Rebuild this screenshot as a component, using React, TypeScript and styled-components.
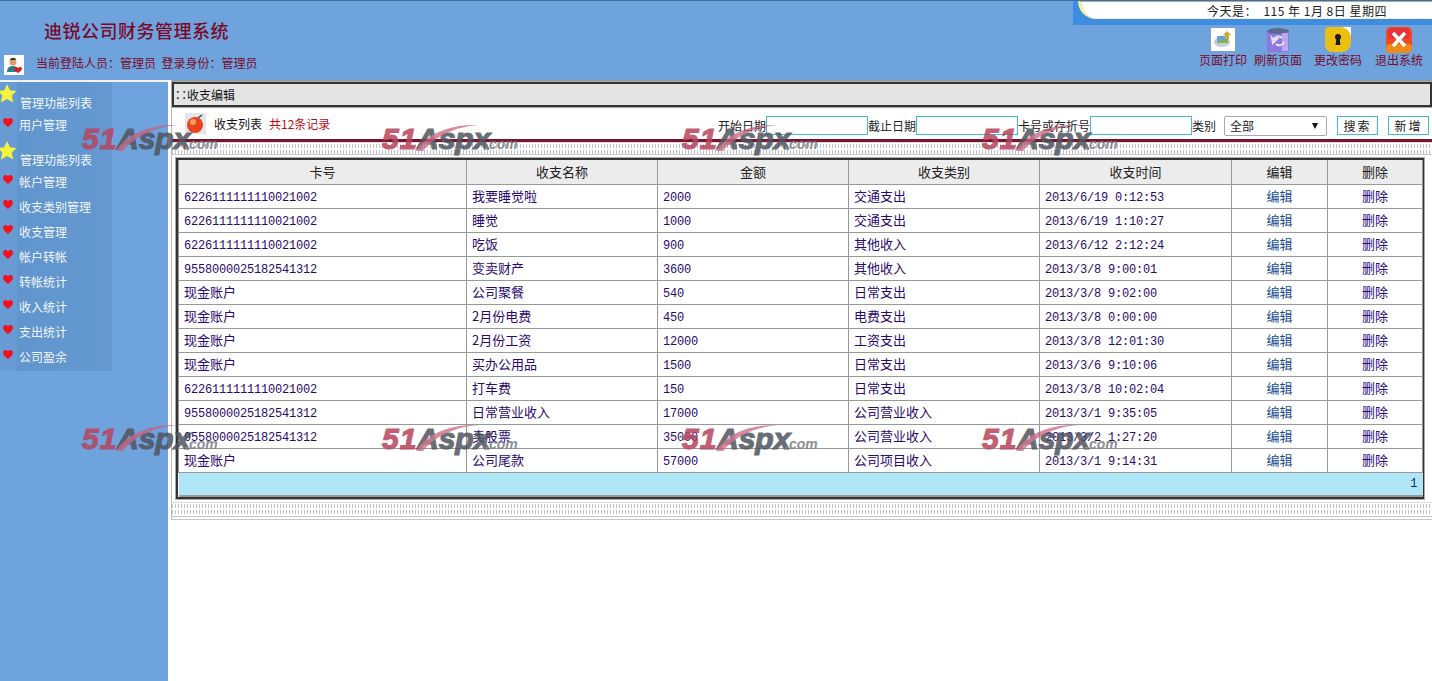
import React from "react";
import styled, { createGlobalStyle } from "styled-components";

const cjk = `"Noto Sans CJK SC", "Liberation Sans", sans-serif`;
const mono = `"Liberation Mono", "Noto Sans CJK SC", monospace`;

const Global = createGlobalStyle`
  html, body { margin: 0; padding: 0; background: #fff; }
  body { font-family: ${cjk}; font-size: 12px; overflow: hidden; }
  * { box-sizing: border-box; }
`;

const Page = styled.div`
  position: relative;
  width: 1432px;
  height: 681px;
  overflow: hidden;
  background: #fff;
`;

const Header = styled.header`
  height: 80px;
  background: #6fa3dd;
  border-top: 1px solid #3f6f9f;
  display: flex;
  justify-content: space-between;
`;
const Brand = styled.div`
  display: flex;
  flex-direction: column;
  padding: 18px 0 0 4px;
`;
const SystemTitle = styled.h1`
  margin: 0 0 0 40px;
  font-size: 18px;
  line-height: 22px;
  letter-spacing: 0.5px;
  font-weight: 500;
  color: #7a0a2a;
`;
const UserLine = styled.div`
  display: flex;
  align-items: flex-start;
  margin-top: 14px;
  color: #7a0a2a;
  font-size: 12px;
  line-height: 16px;
  gap: 12px;
`;
const Avatar = styled.span`
  width: 20px;
  height: 20px;
  background: #fff;
  display: block;
`;
const Tools = styled.div`
  width: 359px;
  display: flex;
  flex-direction: column;
`;
const DateBar = styled.div`
  height: 24px;
  background: #3f8de0;
  padding-left: 5px;
`;
const DateInner = styled.div`
  height: 18px;
  background: #fff;
  border-bottom-left-radius: 20px;
  border-left: 4px solid #eef2a8;
  border-bottom: 1px solid #eef2c8;
  border-top: 1px solid #aaa;
  color: #222;
  font-size: 12px;
  letter-spacing: 0.5px;
  line-height: 17px;
  padding-left: 125px;
  white-space: pre;
`;
const ToolRow = styled.div`
  display: flex;
  padding: 2px 0 0 124px;
`;
const ToolLink = styled.a<{ $w: number }>`
  width: ${(p) => p.$w}px;
  display: flex;
  flex-direction: column;
  align-items: center;
  color: #7a0a2a;
  font-size: 12px;
  line-height: 16px;
`;
const ToolIcon = styled.svg`
  display: block;
  width: 26px;
  height: 26px;
  margin-bottom: -1px;
`;

const Body = styled.div`
  display: flex;
  height: 601px;
`;
const Sidebar = styled.aside`
  width: 168px;
  flex: none;
  background: #6fa3dd;
  border-top: 2px solid #f0f4fa;
`;
const SidePanel = styled.div`
  width: 112px;
  height: 289px;
  padding-top: 10px;
  background: linear-gradient(90deg, #689ad3 0, #689ad3 17px, #6095ce 17px, #6598d1 100%);
`;
const MenuGroup = styled.ul`
  list-style: none;
  margin: 0 0 10px;
  padding: 0;
`;
const MenuTitle = styled.li`
  position: relative;
  height: 22px;
  line-height: 22px;
  padding-left: 20px;
  color: #f2f6fb;
`;
const Star = styled.svg`
  position: absolute;
  left: -2px;
  top: -9px;
  width: 19px;
  height: 21px;
`;
const MenuItem = styled.li`
  position: relative;
  height: 25px;
  line-height: 22px;
  padding-left: 19px;
  color: #f2f6fb;
`;
const Heart = styled.svg`
  position: absolute;
  left: 3px;
  top: 4px;
  width: 10px;
  height: 9px;
`;

const Main = styled.main`
  margin-left: 3px;
  width: 1261px;
  height: 440px;
  border-top: 1px solid #999;
  border-left: 1px solid #bbb;
  border-bottom: 1px solid #c4c4d0;
  padding-top: 1px;
`;
const TitleBar = styled.div`
  height: 25px;
  background: #e4e4e4;
  border: 2px solid #333;
  outline: 1px solid #aaa;
  line-height: 21px;
  padding-left: 1px;
  color: #111;
  font-size: 12px;
`;
const Toolbar = styled.div`
  height: 32px;
  display: flex;
  align-items: center;
  padding: 5px 3px 0 13px;
`;
const ListHead = styled.div`
  display: flex;
  align-items: center;
  margin-bottom: 5px;
`;
const ListIcon = styled.svg`
  width: 21px;
  height: 21px;
  margin-right: 8px;
`;
const ListLabel = styled.span`
  color: #111;
`;
const Count = styled.span`
  color: #c00a1a;
  margin-left: 7px;
`;
const Filters = styled.form`
  margin: 0 0 0 auto;
  display: flex;
  align-items: center;
  color: #222;
  line-height: 20px;
`;
const DateInput = styled.input`
  width: 102px;
  height: 19px;
  border: 1px solid #45bccb;
  background: #fff;
  padding: 0;
`;
const CategorySelect = styled.div`
  width: 103px;
  height: 20px;
  margin: 0 10px 0 8px;
  border: 1px solid #aaa;
  border-radius: 2px;
  display: flex;
  justify-content: space-between;
  align-items: center;
  padding: 0 8px 0 5px;
  font-size: 12px;
  color: #222;
`;
const Caret = styled.i`
  width: 0;
  height: 0;
  border-left: 3.5px solid transparent;
  border-right: 3.5px solid transparent;
  border-top: 6px solid #111;
`;
const ActionButton = styled.button`
  width: 41px;
  height: 19px;
  margin-right: 10px;
  padding: 0;
  border: 1px solid #45bccb;
  background: #fff;
  color: #222;
  font: 12px ${cjk};
  line-height: 16px;
  letter-spacing: 2px;
  &:last-child { margin-right: 0; }
`;
const RedRule = styled.div`
  height: 3px;
  background: #7a1530;
`;
const Dots = styled.div<{ $h: number }>`
  height: ${(p) => p.$h}px;
  border-top: 1px solid #ddd;
  border-bottom: 1px solid #c8c8d4;
  background:
    repeating-linear-gradient(180deg, #fff 0 1px, transparent 1px 5px, #fff 5px 6px),
    repeating-linear-gradient(90deg, #c4c4cc 0 1px, #fff 1px 3px);
`;
const TableFrame = styled.div`
  margin: 3px 4px 3px 4px;
  border: 2px solid #333;
  outline: 1px solid #aaa;
  width: 1248px;
`;
const Grid = styled.table`
  width: 100%;
  border-collapse: collapse;
  table-layout: fixed;
  font-size: 13px;
`;
const Th = styled.th`
  height: 24px;
  padding: 0;
  font-weight: 400;
  color: #222;
  background: #ececec;
  border: 1px solid #999;
  border-top: 0;
`;
const Td = styled.td<{ $num?: boolean }>`
  height: 24px;
  padding: ${(p) => (p.$num ? "4px 0 0 5px" : "0 0 2px 5px")};
  color: #2a0a70;
  border: 1px solid #999;
  font-family: ${(p) => (p.$num ? mono : cjk)};
  font-size: ${(p) => (p.$num ? "12px" : "13px")};
  letter-spacing: ${(p) => (p.$num ? "-0.2px" : "0")};
  white-space: nowrap;
`;
const LinkCell = styled.td<{ $tone: string }>`
  height: 24px;
  padding: 0 0 2px;
  text-align: center;
  color: ${(p) => p.$tone};
  border: 1px solid #999;
  font-size: 13px;
`;
const Pager = styled.td`
  height: 24px;
  background: #aee6f8;
  text-align: right;
  padding-right: 5px;
  color: #1a1a70;
  font-family: ${mono};
  font-size: 12px;
  border-bottom: 2px solid #999;
`;

const Mark = styled.div<{ $x: number; $y: number }>`
  position: absolute;
  left: ${(p) => p.$x}px;
  top: ${(p) => p.$y}px;
  width: 140px;
  height: 34px;
  pointer-events: none;
  white-space: nowrap;
  font-family: "Liberation Sans", sans-serif;
  font-weight: 700;
  font-style: italic;
  opacity: 0.85;
`;
const MarkNum = styled.span`
  position: absolute;
  left: 2px;
  top: 1px;
  font-size: 30px;
  line-height: 30px;
  letter-spacing: 1px;
  color: #b8445e;
  -webkit-text-stroke: 1.2px #b8445e;
`;
const MarkName = styled.span`
  position: absolute;
  left: 37px;
  top: 1px;
  font-size: 30px;
  line-height: 30px;
  color: #50545f;
  -webkit-text-stroke: 1.2px #50545f;
`;
const MarkDomain = styled.span`
  position: absolute;
  left: 105px;
  top: 13px;
  font-size: 14px;
  line-height: 16px;
  color: #7d7d82;
`;
const Swoosh = styled.svg`
  position: absolute;
  left: 36px;
  top: 0;
  width: 62px;
  height: 28px;
`;

const rows = [
  ["6226111111110021002", "我要睡觉啦", "2000", "交通支出", "2013/6/19 0:12:53"],
  ["6226111111110021002", "睡觉", "1000", "交通支出", "2013/6/19 1:10:27"],
  ["6226111111110021002", "吃饭", "900", "其他收入", "2013/6/12 2:12:24"],
  ["9558000025182541312", "变卖财产", "3600", "其他收入", "2013/3/8 9:00:01"],
  ["现金账户", "公司聚餐", "540", "日常支出", "2013/3/8 9:02:00"],
  ["现金账户", "2月份电费", "450", "电费支出", "2013/3/8 0:00:00"],
  ["现金账户", "2月份工资", "12000", "工资支出", "2013/3/8 12:01:30"],
  ["现金账户", "买办公用品", "1500", "日常支出", "2013/3/6 9:10:06"],
  ["6226111111110021002", "打车费", "150", "日常支出", "2013/3/8 10:02:04"],
  ["9558000025182541312", "日常营业收入", "17000", "公司营业收入", "2013/3/1 9:35:05"],
  ["9558000025182541312", "卖股票", "35000", "公司营业收入", "2013/3/2 1:27:20"],
  ["现金账户", "公司尾款", "57000", "公司项目收入", "2013/3/1 9:14:31"],
];
const heads = ["卡号", "收支名称", "金额", "收支类别", "收支时间", "编辑", "删除"];
const widths = [288, 191, 191, 191, 192, 96, 95];
const menuB = ["帐户管理", "收支类别管理", "收支管理", "帐户转帐", "转帐统计", "收入统计", "支出统计", "公司盈余"];
const isNumeric = (s: string) => /^[\d/: ]+$/.test(s);

const StarIcon = () => (
  <Star viewBox="0 0 20 20"><path d="M9.500 0l3 6.500 7 .8-5 4.800 1.500 7.400-6.500-3.700L3 19.500 4.500 12 -.5 7.300l7-.8z" fill="#f6f43a" /></Star>
);
const HeartIcon = () => (
  <Heart viewBox="0 0 11 10"><path d="M5.500 10C2 7.200 0 5.500 0 3 0 1.200 1.300 0 2.800 0 4 0 5 .7 5.500 1.700 6 .7 7 0 8.200 0 9.700 0 11 1.200 11 3c0 2.500-2 4.200-5.500 7z" fill="#f4101c" /></Heart>
);

const WaterMark = ({ x, y }: { x: number; y: number }) => (
  <Mark $x={x} $y={y}>
    <MarkNum>51</MarkNum>
    <MarkName>Aspx</MarkName>
    <MarkDomain>.com</MarkDomain>
    <Swoosh viewBox="0 0 62 28">
      <path d="M0 28C10 12 32 1 62 2 38 4 18 14 7 28z" fill="#c8607a" opacity="0.85" />
    </Swoosh>
  </Mark>
);

export default function App() {
  const marks = [80, 380, 680, 980];
  return (
    <Page>
      <Global />
      <Header>
        <Brand>
          <SystemTitle>迪锐公司财务管理系统</SystemTitle>
          <UserLine>
            <Avatar>
              <svg width="20" height="20" viewBox="0 0 20 20">
                <circle cx="9" cy="7" r="3.500" fill="#d9a060" />
                <path d="M6 5c0-3 6-3 6 0z" fill="#3a3a2a" />
                <path d="M3 17c0-5 3-6 6-6s5 2 5 6z" fill="#2f7f8f" />
                <path d="M14 18c-3-2-4-3-4-4.500 0-2 3-2 4-.5 1-1.500 4-1.500 4 .5 0 1.500-1 2.500-4 4.500z" fill="#d8202a" />
              </svg>
            </Avatar>
            <span>当前登陆人员：管理员&nbsp;&nbsp;登录身份：管理员</span>
          </UserLine>
        </Brand>
        <Tools>
          <DateBar>
            <DateInner>今天是：  115 年 1月 8日 星期四</DateInner>
          </DateBar>
          <ToolRow>
            <ToolLink $w={52}>
              <ToolIcon viewBox="0 0 26 26">
                <rect x="1" y="1" width="24" height="23" fill="#fff" />
                <ellipse cx="12" cy="15" rx="8" ry="5" fill="#c4ccd4" />
                <rect x="7" y="9" width="11" height="7" fill="#5fa5d8" />
                <path d="M7 16l4-4 3 2 4-2v4z" fill="#8ab04a" />
                <path d="M17 4l4 4h-2v4h-4V8h-2z" fill="#d4a82a" />
              </ToolIcon>
              页面打印
            </ToolLink>
            <ToolLink $w={58}>
              <ToolIcon viewBox="0 0 26 26">
                <rect x="2" y="3" width="22" height="22" rx="2" fill="#8f78e0" />
                <ellipse cx="13" cy="4" rx="11" ry="3" fill="#5a6a90" />
                <rect x="17" y="6" width="6" height="18" fill="#b8a8f0" />
                <path d="M17 11a5 5 0 0 0-8 1h3l-4 4-1-5 1 1m3 5a5 5 0 0 0 8-2" stroke="#e8e4ff" strokeWidth="2" fill="none" />
              </ToolIcon>
              刷新页面
            </ToolLink>
            <ToolLink $w={62}>
              <ToolIcon viewBox="0 0 26 26">
                <rect x="13" y="0" width="13" height="12" fill="#fff" />
                <path d="M0 4a4 4 0 0 1 4-4h11a11 11 0 0 1 11 11v5a9 9 0 0 1-9 9H7a7 7 0 0 1-7-7z" fill="#ecc010" />
                <circle cx="13" cy="10" r="3" fill="#221a08" />
                <path d="M11.500 11h3l1 7h-5z" fill="#221a08" />
              </ToolIcon>
              更改密码
            </ToolLink>
            <ToolLink $w={60}>
              <ToolIcon viewBox="0 0 26 26">
                <rect x="0" y="0" width="26" height="26" rx="5" fill="#f04a20" />
                <rect x="2" y="1" width="22" height="11" rx="4" fill="#e8323a" />
                <rect x="0" y="17" width="26" height="9" rx="4" fill="#ef8a18" />
                <path d="M7 6l12 13M19 6L7 19" stroke="#fff" strokeWidth="3.500" />
              </ToolIcon>
              退出系统
            </ToolLink>
          </ToolRow>
        </Tools>
      </Header>
      <Body>
        <Sidebar>
          <SidePanel>
            <MenuGroup>
              <MenuTitle><StarIcon />管理功能列表</MenuTitle>
              <MenuItem><HeartIcon />用户管理</MenuItem>
            </MenuGroup>
            <MenuGroup>
              <MenuTitle><StarIcon />管理功能列表</MenuTitle>
              {menuB.map((m) => (
                <MenuItem key={m}><HeartIcon />{m}</MenuItem>
              ))}
            </MenuGroup>
          </SidePanel>
        </Sidebar>
        <Main>
          <TitleBar>∷收支编辑</TitleBar>
          <Toolbar>
            <ListHead>
              <ListIcon viewBox="0 0 21 21">
                <rect width="21" height="21" fill="#e4e4ec" />
                <circle cx="10" cy="12" r="8" fill="#e8441a" />
                <circle cx="8" cy="9" r="3" fill="#f8a060" />
                <path d="M13 5l4-3" stroke="#444" strokeWidth="1.500" />
              </ListIcon>
              <ListLabel>收支列表</ListLabel>
              <Count>共12条记录</Count>
            </ListHead>
            <Filters>
              开始日期<DateInput />
              截止日期<DateInput />
              卡号或存折号<DateInput />
              类别
              <CategorySelect>全部<Caret /></CategorySelect>
              <ActionButton type="button">搜索</ActionButton>
              <ActionButton type="button">新增</ActionButton>
            </Filters>
          </Toolbar>
          <RedRule />
          <Dots $h={13} />
          <TableFrame>
            <Grid>
              <colgroup>
                {widths.map((w, i) => <col key={i} style={{ width: w }} />)}
              </colgroup>
              <thead>
                <tr>{heads.map((h) => <Th key={h}>{h}</Th>)}</tr>
              </thead>
              <tbody>
                {rows.map((r, i) => (
                  <tr key={i}>
                    {r.map((c, j) => <Td key={j} $num={isNumeric(c)}>{c}</Td>)}
                    <LinkCell $tone="#1a4f8f">编辑</LinkCell>
                    <LinkCell $tone="#2a0a80">删除</LinkCell>
                  </tr>
                ))}
                <tr><Pager colSpan={7}>1</Pager></tr>
              </tbody>
            </Grid>
          </TableFrame>
          <Dots $h={15} />
        </Main>
      </Body>
      {marks.map((x) => <WaterMark key={x} x={x} y={123} />)}
      {marks.map((x) => <WaterMark key={x + 1} x={x} y={423} />)}
    </Page>
  );
}
